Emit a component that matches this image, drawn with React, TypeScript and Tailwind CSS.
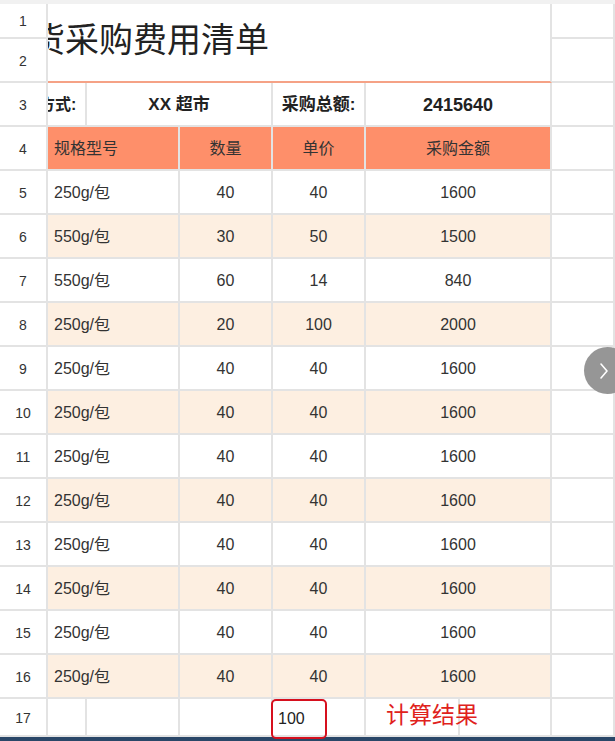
import React from 'react';

type Row = { n: number; spec: string; qty: number; price: number; amount: number };

const data: Row[] = [
  { n: 5, spec: '250g/包', qty: 40, price: 40, amount: 1600 },
  { n: 6, spec: '550g/包', qty: 30, price: 50, amount: 1500 },
  { n: 7, spec: '550g/包', qty: 60, price: 14, amount: 840 },
  { n: 8, spec: '250g/包', qty: 20, price: 100, amount: 2000 },
  ...[9, 10, 11, 12, 13, 14, 15, 16].map((n) => ({ n, spec: '250g/包', qty: 40, price: 40, amount: 1600 })),
];

const cell = 'border-r-2 border-b-2 border-[#e3e3e3] flex items-center overflow-hidden pt-[2px]';
const head = `${cell} justify-center bg-white text-[14px] text-[#333]`;

const App: React.FC = () => {
  return (
    <div className="w-[615px] h-[741px] overflow-hidden bg-white flex flex-col font-['Liberation_Sans','Noto_Sans_CJK_SC',sans-serif] text-[#333]">
      <div className="h-[4px] bg-[#f1f1f1] shrink-0" />

      <div className="relative grid grid-cols-[48px_39px_93px_93px_93px_94px_92px_1fr] grid-rows-[35px_repeat(15,44px)_38px] shrink-0">
        {/* rows 1-2: title */}
        <div className={head}>1</div>
        <div className="col-span-6 row-span-2 border-r-2 border-r-[#e3e3e3] border-b-2 border-b-[#f5a286] flex items-center overflow-hidden pb-[6px]">
          <span className="-ml-[17px] text-[34px] leading-none whitespace-nowrap text-[#222]">货采购费用清单</span>
        </div>
        <div className={cell} />
        <div className={head}>2</div>
        <div className={cell} />

        {/* row 3 */}
        <div className={head}>3</div>
        <div className={`${cell} font-semibold text-[16px] text-[#222]`}>
          <span className="-ml-[9px] whitespace-nowrap">方式:</span>
        </div>
        <div className={`${cell} col-span-2 justify-center font-semibold text-[17px] text-[#222]`}>XX 超市</div>
        <div className={`${cell} justify-center font-semibold text-[17px] text-[#222]`}>采购总额:</div>
        <div className={`${cell} col-span-2 justify-center font-semibold text-[18px] text-[#222]`}>2415640</div>
        <div className={cell} />

        {/* row 4: header */}
        <div className={head}>4</div>
        <div className={`${cell} col-span-2 bg-[#fe8f6a] pl-[6px] text-[16px]`}>规格型号</div>
        <div className={`${cell} justify-center bg-[#fe8f6a] text-[16px]`}>数量</div>
        <div className={`${cell} justify-center bg-[#fe8f6a] text-[16px]`}>单价</div>
        <div className={`${cell} col-span-2 justify-center bg-[#fe8f6a] text-[16px]`}>采购金额</div>
        <div className={cell} />

        {data.map((r) => {
          const bg = r.n % 2 === 0 ? 'bg-[#fdefe1]' : 'bg-white';
          return (
            <React.Fragment key={r.n}>
              <div className={head}>{r.n}</div>
              <div className={`${cell} ${bg} col-span-2 pl-[6px] text-[16px]`}>{r.spec}</div>
              <div className={`${cell} ${bg} justify-center text-[16px]`}>{r.qty}</div>
              <div className={`${cell} ${bg} justify-center text-[16px]`}>{r.price}</div>
              <div className={`${cell} ${bg} col-span-2 justify-center text-[16px]`}>{r.amount}</div>
              <div className={cell} />
            </React.Fragment>
          );
        })}

        {/* row 17 */}
        <div className={head}>17</div>
        <div className={cell} />
        <div className={cell} />
        <div className={cell} />
        <div className="relative border-r-2 border-b-2 border-[#e3e3e3]">
          <div className="absolute -left-[2px] top-[0px] w-[56px] h-[40px] rounded-[5px] border-2 border-[#d6101e] flex items-end pb-[6px] pl-[5px] text-[16px] text-[#222]">
            100
          </div>
        </div>
        <div className="relative border-r-2 border-b-2 border-[#e3e3e3]">
          <span className="absolute left-[20px] -top-[1px] text-[23px] leading-[30px] whitespace-nowrap text-[#e0221c] font-['Noto_Sans_CJK_SC',sans-serif]">
            计算结果
          </span>
        </div>
        <div className={cell} />
        <div className={cell} />

        {/* side arrow button */}
        <div className="absolute left-[584px] top-[343px] w-[47px] h-[47px] rounded-full bg-[#969696] flex items-center pl-[15px]">
          <svg width="10" height="18" viewBox="0 0 10 18" fill="none">
            <path d="M2 2 L8 9 L2 16" stroke="#fff" strokeWidth="1.6" strokeLinecap="round" strokeLinejoin="round" />
          </svg>
        </div>
      </div>

      <div className="h-[4px] bg-[#2a4768] shrink-0" />
    </div>
  );
};

export default App;
